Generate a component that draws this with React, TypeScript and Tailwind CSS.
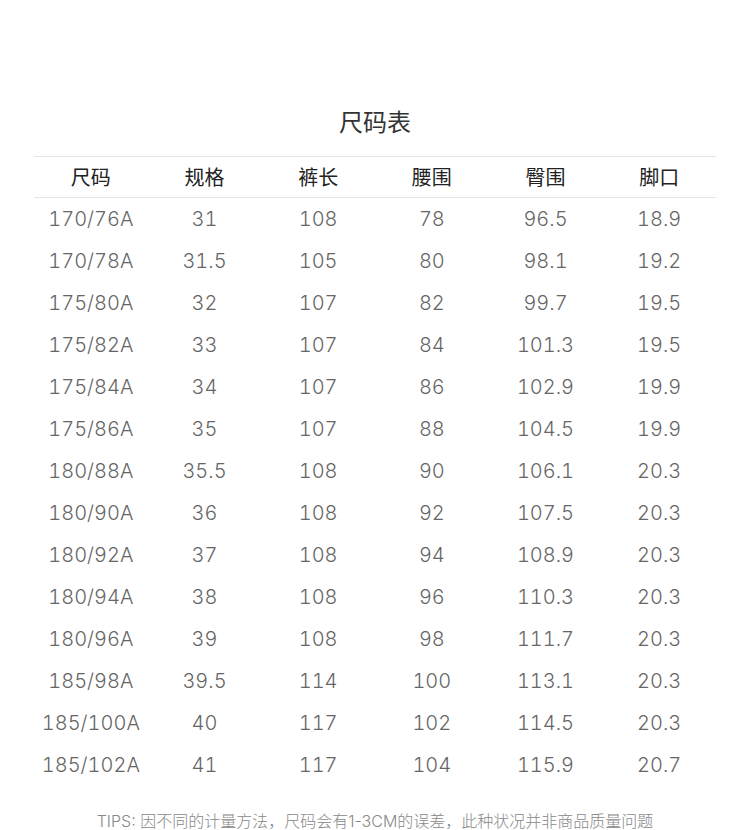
const headers = ["尺码", "规格", "裤长", "腰围", "臀围", "脚口"];

const rows = [
  ["170/76A", "31", "108", "78", "96.5", "18.9"],
  ["170/78A", "31.5", "105", "80", "98.1", "19.2"],
  ["175/80A", "32", "107", "82", "99.7", "19.5"],
  ["175/82A", "33", "107", "84", "101.3", "19.5"],
  ["175/84A", "34", "107", "86", "102.9", "19.9"],
  ["175/86A", "35", "107", "88", "104.5", "19.9"],
  ["180/88A", "35.5", "108", "90", "106.1", "20.3"],
  ["180/90A", "36", "108", "92", "107.5", "20.3"],
  ["180/92A", "37", "108", "94", "108.9", "20.3"],
  ["180/94A", "38", "108", "96", "110.3", "20.3"],
  ["180/96A", "39", "108", "98", "111.7", "20.3"],
  ["185/98A", "39.5", "114", "100", "113.1", "20.3"],
  ["185/100A", "40", "117", "102", "114.5", "20.3"],
  ["185/102A", "41", "117", "104", "115.9", "20.7"],
];

export default function App() {
  return (
    <div className="w-[750px] h-[830px] bg-white pt-[105px] font-['Noto_Sans_CJK_SC','Noto_Sans',sans-serif]">
      {/* title */}
      <h1 className="text-center text-[24px] leading-[32px] text-[#333] font-normal">尺码表</h1>

      {/* table */}
      <div className="mt-[19px] mx-[34px]">
        <div className="grid grid-cols-6 h-[42px] border-y border-[#e5e5e5] items-center text-center text-[20px] text-[#222]">
          {headers.map((h) => (
            <div key={h}>{h}</div>
          ))}
        </div>
        {rows.map((r, i) => (
          <div
            key={i}
            className="grid grid-cols-6 h-[42px] items-center text-center text-[20px] leading-[26px] text-[#666] font-light tabular-nums font-['Inter','Noto_Sans_CJK_SC',sans-serif]"
          >
            {r.map((c, j) => (
              <div key={j}>{c}</div>
            ))}
          </div>
        ))}
      </div>

      {/* tips */}
      <p className="mt-[26px] text-center text-[16px] leading-[18px] text-[#888] font-light font-['Inter','Noto_Sans_CJK_SC',sans-serif]">
        TIPS: 因不同的计量方法，尺码会有1-3CM的误差，此种状况并非商品质量问题
      </p>
    </div>
  );
}
